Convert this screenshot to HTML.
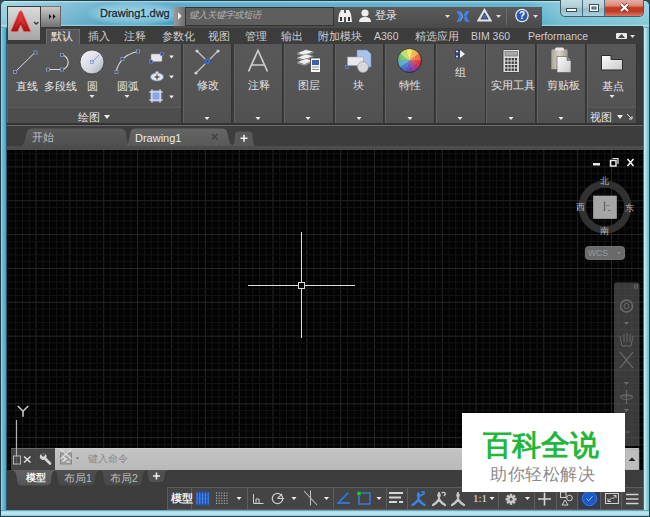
<!DOCTYPE html>
<html><head><meta charset="utf-8">
<style>
*{margin:0;padding:0;box-sizing:border-box}
html,body{width:650px;height:517px;overflow:hidden}
body{position:relative;background:#2c4c58;font-family:"Liberation Sans",sans-serif;color:#ddd}
.a{position:absolute}
.t{position:absolute;white-space:nowrap;line-height:1}
</style></head><body>
<!-- window frame -->
<div class="a" style="left:0;top:0;width:650px;height:517px;background:#6cc0dc;border:1px solid #23404c;border-radius:6px 6px 0 0"></div>
<div class="a" style="left:1px;top:28px;width:6px;height:488px;background:linear-gradient(90deg,#a4d6e4 0,#7cc0d8 20%,#5aaccc 60%,#4a9cc0 83%,#2a5a70 84%,#2a5a70 100%)"></div>
<div class="a" style="left:643px;top:28px;width:6px;height:488px;background:linear-gradient(90deg,#3c6e7e 0,#3c6e7e 16%,#c4eaf2 17%,#b4e2ec 45%,#86cadb 70%,#6cbcd2 100%)"></div>
<div class="a" style="left:1px;top:510px;width:648px;height:6px;background:linear-gradient(180deg,#4a8a9c 0,#a8dcea 25%,#c4eaf2 55%,#8ccfe2 100%)"></div>
<!-- title bar -->
<div class="a" style="left:1px;top:1px;width:648px;height:27px;border-radius:5px 5px 0 0;background:linear-gradient(90deg,#96cedd 0,#78bad2 60px,#56a8c8 110px,#4aa2c4 175px,#52aac8 520px,#78c2d6 560px,#8ccfde 100%)"></div>
<div class="a" style="left:1px;top:1px;width:648px;height:27px;border-radius:5px 5px 0 0;background:linear-gradient(180deg,rgba(255,255,255,0.6) 0,rgba(255,255,255,0.14) 2px,rgba(255,255,255,0.08) 40%,rgba(0,40,60,0.04) 86%,rgba(255,255,255,0.3) 91%,rgba(255,255,255,0.3) 93%,rgba(0,0,0,0.3) 100%)"></div>
<!-- ribbon tab bar -->
<div class="a" style="left:7px;top:26px;width:636px;height:18px;background:#3c3c3c;border-top:1px solid #2c3c44"></div>
<!-- ribbon panels bg -->
<div class="a" style="left:7px;top:44px;width:636px;height:81px;background:#3b3b3b"></div>
<!-- file tab bar -->
<div class="a" style="left:7px;top:125px;width:636px;height:24px;background:#3d3d3d"></div>
<!-- drawing area -->
<div class="a" style="left:7px;top:150px;width:636px;height:320px;background:#030303"></div>
<!-- grid -->
<svg class="a" style="left:0;top:0" width="650" height="517"><line x1="8.97" y1="150" x2="8.97" y2="469" stroke="#141414" stroke-width="1"/><line x1="15.74" y1="150" x2="15.74" y2="469" stroke="#141414" stroke-width="1"/><line x1="22.51" y1="150" x2="22.51" y2="469" stroke="#141414" stroke-width="1"/><line x1="29.28" y1="150" x2="29.28" y2="469" stroke="#141414" stroke-width="1"/><line x1="36.05" y1="150" x2="36.05" y2="469" stroke="#272727" stroke-width="1"/><line x1="42.82" y1="150" x2="42.82" y2="469" stroke="#141414" stroke-width="1"/><line x1="49.59" y1="150" x2="49.59" y2="469" stroke="#141414" stroke-width="1"/><line x1="56.36" y1="150" x2="56.36" y2="469" stroke="#141414" stroke-width="1"/><line x1="63.13" y1="150" x2="63.13" y2="469" stroke="#141414" stroke-width="1"/><line x1="69.90" y1="150" x2="69.90" y2="469" stroke="#272727" stroke-width="1"/><line x1="76.67" y1="150" x2="76.67" y2="469" stroke="#141414" stroke-width="1"/><line x1="83.44" y1="150" x2="83.44" y2="469" stroke="#141414" stroke-width="1"/><line x1="90.21" y1="150" x2="90.21" y2="469" stroke="#141414" stroke-width="1"/><line x1="96.98" y1="150" x2="96.98" y2="469" stroke="#141414" stroke-width="1"/><line x1="103.75" y1="150" x2="103.75" y2="469" stroke="#272727" stroke-width="1"/><line x1="110.52" y1="150" x2="110.52" y2="469" stroke="#141414" stroke-width="1"/><line x1="117.29" y1="150" x2="117.29" y2="469" stroke="#141414" stroke-width="1"/><line x1="124.06" y1="150" x2="124.06" y2="469" stroke="#141414" stroke-width="1"/><line x1="130.83" y1="150" x2="130.83" y2="469" stroke="#141414" stroke-width="1"/><line x1="137.60" y1="150" x2="137.60" y2="469" stroke="#272727" stroke-width="1"/><line x1="144.37" y1="150" x2="144.37" y2="469" stroke="#141414" stroke-width="1"/><line x1="151.14" y1="150" x2="151.14" y2="469" stroke="#141414" stroke-width="1"/><line x1="157.91" y1="150" x2="157.91" y2="469" stroke="#141414" stroke-width="1"/><line x1="164.68" y1="150" x2="164.68" y2="469" stroke="#141414" stroke-width="1"/><line x1="171.45" y1="150" x2="171.45" y2="469" stroke="#272727" stroke-width="1"/><line x1="178.22" y1="150" x2="178.22" y2="469" stroke="#141414" stroke-width="1"/><line x1="184.99" y1="150" x2="184.99" y2="469" stroke="#141414" stroke-width="1"/><line x1="191.76" y1="150" x2="191.76" y2="469" stroke="#141414" stroke-width="1"/><line x1="198.53" y1="150" x2="198.53" y2="469" stroke="#141414" stroke-width="1"/><line x1="205.30" y1="150" x2="205.30" y2="469" stroke="#272727" stroke-width="1"/><line x1="212.07" y1="150" x2="212.07" y2="469" stroke="#141414" stroke-width="1"/><line x1="218.84" y1="150" x2="218.84" y2="469" stroke="#141414" stroke-width="1"/><line x1="225.61" y1="150" x2="225.61" y2="469" stroke="#141414" stroke-width="1"/><line x1="232.38" y1="150" x2="232.38" y2="469" stroke="#141414" stroke-width="1"/><line x1="239.15" y1="150" x2="239.15" y2="469" stroke="#272727" stroke-width="1"/><line x1="245.92" y1="150" x2="245.92" y2="469" stroke="#141414" stroke-width="1"/><line x1="252.69" y1="150" x2="252.69" y2="469" stroke="#141414" stroke-width="1"/><line x1="259.46" y1="150" x2="259.46" y2="469" stroke="#141414" stroke-width="1"/><line x1="266.23" y1="150" x2="266.23" y2="469" stroke="#141414" stroke-width="1"/><line x1="273.00" y1="150" x2="273.00" y2="469" stroke="#272727" stroke-width="1"/><line x1="279.77" y1="150" x2="279.77" y2="469" stroke="#141414" stroke-width="1"/><line x1="286.54" y1="150" x2="286.54" y2="469" stroke="#141414" stroke-width="1"/><line x1="293.31" y1="150" x2="293.31" y2="469" stroke="#141414" stroke-width="1"/><line x1="300.08" y1="150" x2="300.08" y2="469" stroke="#141414" stroke-width="1"/><line x1="306.85" y1="150" x2="306.85" y2="469" stroke="#272727" stroke-width="1"/><line x1="313.62" y1="150" x2="313.62" y2="469" stroke="#141414" stroke-width="1"/><line x1="320.39" y1="150" x2="320.39" y2="469" stroke="#141414" stroke-width="1"/><line x1="327.16" y1="150" x2="327.16" y2="469" stroke="#141414" stroke-width="1"/><line x1="333.93" y1="150" x2="333.93" y2="469" stroke="#141414" stroke-width="1"/><line x1="340.70" y1="150" x2="340.70" y2="469" stroke="#272727" stroke-width="1"/><line x1="347.47" y1="150" x2="347.47" y2="469" stroke="#141414" stroke-width="1"/><line x1="354.24" y1="150" x2="354.24" y2="469" stroke="#141414" stroke-width="1"/><line x1="361.01" y1="150" x2="361.01" y2="469" stroke="#141414" stroke-width="1"/><line x1="367.78" y1="150" x2="367.78" y2="469" stroke="#141414" stroke-width="1"/><line x1="374.55" y1="150" x2="374.55" y2="469" stroke="#272727" stroke-width="1"/><line x1="381.32" y1="150" x2="381.32" y2="469" stroke="#141414" stroke-width="1"/><line x1="388.09" y1="150" x2="388.09" y2="469" stroke="#141414" stroke-width="1"/><line x1="394.86" y1="150" x2="394.86" y2="469" stroke="#141414" stroke-width="1"/><line x1="401.63" y1="150" x2="401.63" y2="469" stroke="#141414" stroke-width="1"/><line x1="408.40" y1="150" x2="408.40" y2="469" stroke="#272727" stroke-width="1"/><line x1="415.17" y1="150" x2="415.17" y2="469" stroke="#141414" stroke-width="1"/><line x1="421.94" y1="150" x2="421.94" y2="469" stroke="#141414" stroke-width="1"/><line x1="428.71" y1="150" x2="428.71" y2="469" stroke="#141414" stroke-width="1"/><line x1="435.48" y1="150" x2="435.48" y2="469" stroke="#141414" stroke-width="1"/><line x1="442.25" y1="150" x2="442.25" y2="469" stroke="#272727" stroke-width="1"/><line x1="449.02" y1="150" x2="449.02" y2="469" stroke="#141414" stroke-width="1"/><line x1="455.79" y1="150" x2="455.79" y2="469" stroke="#141414" stroke-width="1"/><line x1="462.56" y1="150" x2="462.56" y2="469" stroke="#141414" stroke-width="1"/><line x1="469.33" y1="150" x2="469.33" y2="469" stroke="#141414" stroke-width="1"/><line x1="476.10" y1="150" x2="476.10" y2="469" stroke="#272727" stroke-width="1"/><line x1="482.87" y1="150" x2="482.87" y2="469" stroke="#141414" stroke-width="1"/><line x1="489.64" y1="150" x2="489.64" y2="469" stroke="#141414" stroke-width="1"/><line x1="496.41" y1="150" x2="496.41" y2="469" stroke="#141414" stroke-width="1"/><line x1="503.18" y1="150" x2="503.18" y2="469" stroke="#141414" stroke-width="1"/><line x1="509.95" y1="150" x2="509.95" y2="469" stroke="#272727" stroke-width="1"/><line x1="516.72" y1="150" x2="516.72" y2="469" stroke="#141414" stroke-width="1"/><line x1="523.49" y1="150" x2="523.49" y2="469" stroke="#141414" stroke-width="1"/><line x1="530.26" y1="150" x2="530.26" y2="469" stroke="#141414" stroke-width="1"/><line x1="537.03" y1="150" x2="537.03" y2="469" stroke="#141414" stroke-width="1"/><line x1="543.80" y1="150" x2="543.80" y2="469" stroke="#272727" stroke-width="1"/><line x1="550.57" y1="150" x2="550.57" y2="469" stroke="#141414" stroke-width="1"/><line x1="557.34" y1="150" x2="557.34" y2="469" stroke="#141414" stroke-width="1"/><line x1="564.11" y1="150" x2="564.11" y2="469" stroke="#141414" stroke-width="1"/><line x1="570.88" y1="150" x2="570.88" y2="469" stroke="#141414" stroke-width="1"/><line x1="577.65" y1="150" x2="577.65" y2="469" stroke="#272727" stroke-width="1"/><line x1="584.42" y1="150" x2="584.42" y2="469" stroke="#141414" stroke-width="1"/><line x1="591.19" y1="150" x2="591.19" y2="469" stroke="#141414" stroke-width="1"/><line x1="597.96" y1="150" x2="597.96" y2="469" stroke="#141414" stroke-width="1"/><line x1="604.73" y1="150" x2="604.73" y2="469" stroke="#141414" stroke-width="1"/><line x1="611.50" y1="150" x2="611.50" y2="469" stroke="#272727" stroke-width="1"/><line x1="618.27" y1="150" x2="618.27" y2="469" stroke="#141414" stroke-width="1"/><line x1="625.04" y1="150" x2="625.04" y2="469" stroke="#141414" stroke-width="1"/><line x1="631.81" y1="150" x2="631.81" y2="469" stroke="#141414" stroke-width="1"/><line x1="638.58" y1="150" x2="638.58" y2="469" stroke="#141414" stroke-width="1"/><line x1="7" y1="153.36" x2="643" y2="153.36" stroke="#141414" stroke-width="1"/><line x1="7" y1="160.13" x2="643" y2="160.13" stroke="#141414" stroke-width="1"/><line x1="7" y1="166.90" x2="643" y2="166.90" stroke="#272727" stroke-width="1"/><line x1="7" y1="173.67" x2="643" y2="173.67" stroke="#141414" stroke-width="1"/><line x1="7" y1="180.44" x2="643" y2="180.44" stroke="#141414" stroke-width="1"/><line x1="7" y1="187.21" x2="643" y2="187.21" stroke="#141414" stroke-width="1"/><line x1="7" y1="193.98" x2="643" y2="193.98" stroke="#141414" stroke-width="1"/><line x1="7" y1="200.75" x2="643" y2="200.75" stroke="#272727" stroke-width="1"/><line x1="7" y1="207.52" x2="643" y2="207.52" stroke="#141414" stroke-width="1"/><line x1="7" y1="214.29" x2="643" y2="214.29" stroke="#141414" stroke-width="1"/><line x1="7" y1="221.06" x2="643" y2="221.06" stroke="#141414" stroke-width="1"/><line x1="7" y1="227.83" x2="643" y2="227.83" stroke="#141414" stroke-width="1"/><line x1="7" y1="234.60" x2="643" y2="234.60" stroke="#272727" stroke-width="1"/><line x1="7" y1="241.37" x2="643" y2="241.37" stroke="#141414" stroke-width="1"/><line x1="7" y1="248.14" x2="643" y2="248.14" stroke="#141414" stroke-width="1"/><line x1="7" y1="254.91" x2="643" y2="254.91" stroke="#141414" stroke-width="1"/><line x1="7" y1="261.68" x2="643" y2="261.68" stroke="#141414" stroke-width="1"/><line x1="7" y1="268.45" x2="643" y2="268.45" stroke="#272727" stroke-width="1"/><line x1="7" y1="275.22" x2="643" y2="275.22" stroke="#141414" stroke-width="1"/><line x1="7" y1="281.99" x2="643" y2="281.99" stroke="#141414" stroke-width="1"/><line x1="7" y1="288.76" x2="643" y2="288.76" stroke="#141414" stroke-width="1"/><line x1="7" y1="295.53" x2="643" y2="295.53" stroke="#141414" stroke-width="1"/><line x1="7" y1="302.30" x2="643" y2="302.30" stroke="#272727" stroke-width="1"/><line x1="7" y1="309.07" x2="643" y2="309.07" stroke="#141414" stroke-width="1"/><line x1="7" y1="315.84" x2="643" y2="315.84" stroke="#141414" stroke-width="1"/><line x1="7" y1="322.61" x2="643" y2="322.61" stroke="#141414" stroke-width="1"/><line x1="7" y1="329.38" x2="643" y2="329.38" stroke="#141414" stroke-width="1"/><line x1="7" y1="336.15" x2="643" y2="336.15" stroke="#272727" stroke-width="1"/><line x1="7" y1="342.92" x2="643" y2="342.92" stroke="#141414" stroke-width="1"/><line x1="7" y1="349.69" x2="643" y2="349.69" stroke="#141414" stroke-width="1"/><line x1="7" y1="356.46" x2="643" y2="356.46" stroke="#141414" stroke-width="1"/><line x1="7" y1="363.23" x2="643" y2="363.23" stroke="#141414" stroke-width="1"/><line x1="7" y1="370.00" x2="643" y2="370.00" stroke="#272727" stroke-width="1"/><line x1="7" y1="376.77" x2="643" y2="376.77" stroke="#141414" stroke-width="1"/><line x1="7" y1="383.54" x2="643" y2="383.54" stroke="#141414" stroke-width="1"/><line x1="7" y1="390.31" x2="643" y2="390.31" stroke="#141414" stroke-width="1"/><line x1="7" y1="397.08" x2="643" y2="397.08" stroke="#141414" stroke-width="1"/><line x1="7" y1="403.85" x2="643" y2="403.85" stroke="#272727" stroke-width="1"/><line x1="7" y1="410.62" x2="643" y2="410.62" stroke="#141414" stroke-width="1"/><line x1="7" y1="417.39" x2="643" y2="417.39" stroke="#141414" stroke-width="1"/><line x1="7" y1="424.16" x2="643" y2="424.16" stroke="#141414" stroke-width="1"/><line x1="7" y1="430.93" x2="643" y2="430.93" stroke="#141414" stroke-width="1"/><line x1="7" y1="437.70" x2="643" y2="437.70" stroke="#272727" stroke-width="1"/><line x1="7" y1="444.47" x2="643" y2="444.47" stroke="#141414" stroke-width="1"/><line x1="7" y1="451.24" x2="643" y2="451.24" stroke="#141414" stroke-width="1"/><line x1="7" y1="458.01" x2="643" y2="458.01" stroke="#141414" stroke-width="1"/><line x1="7" y1="464.78" x2="643" y2="464.78" stroke="#141414" stroke-width="1"/></svg>
<!-- drawing overlays -->
<svg class="a" style="left:0;top:0" width="650" height="517">
<!-- crosshair -->
<path d="M301.5 232 V282.5 M301.5 288.5 V338 M248 285.5 H298.5 M304.5 285.5 H355" stroke="#dcdcdc" stroke-width="1"/>
<rect x="298.5" y="282.5" width="6" height="6" fill="none" stroke="#d8d8d8" stroke-width="1"/>
<!-- UCS -->
<path d="M17.8 406 L23 411.3 L28.2 406 M23 411.3 V416.8" fill="none" stroke="#d0d0d0" stroke-width="1.5"/>
<path d="M16.5 420 V465" stroke="#b0b0b0" stroke-width="1.2"/>
<!-- viewport controls -->
<rect x="593" y="163" width="7" height="2.5" fill="#e8e8e8"/>
<rect x="610.5" y="160.5" width="5.5" height="5.5" fill="none" stroke="#e8e8e8" stroke-width="1.5"/>
<path d="M612.5 158.5 H618 V164" fill="none" stroke="#e8e8e8" stroke-width="1.2"/>
<path d="M627.5 159 L633.5 166 M633.5 159 L627.5 166" stroke="#f0f0f0" stroke-width="1.6"/>
<!-- viewcube -->
<circle cx="605" cy="207" r="22.8" fill="none" stroke="#313131" stroke-width="7.2"/>
<rect x="593.5" y="196" width="23" height="22.5" fill="#a6a6a6" stroke="#b4b4b4" stroke-width="0.6"/>
<!-- WCS -->
<rect x="585.5" y="246.5" width="39" height="13" rx="3" fill="#6a6a6a" stroke="#808080" stroke-width="0.8"/>
<path d="M617 252 L621 252 L619 254.5Z" fill="#8a8a8a"/>
<!-- navbar -->
<path d="M614 446 V285 Q614 282.5 616.5 282.5 L637 282.5 Q639.5 282.5 639.5 285 V446Z" fill="#5c5c5c" fill-opacity="0.62"/>
<rect x="634.5" y="285" width="3" height="3" fill="none" stroke="#7a7a7a" stroke-width="0.7"/>
<circle cx="626.5" cy="306" r="6" fill="none" stroke="#6a6a6a" stroke-width="1.5"/>
<circle cx="626.5" cy="306" r="2.5" fill="none" stroke="#6a6a6a" stroke-width="1"/>
<path d="M624 322 L629 322 L626.5 325Z" fill="#6a6a6a"/>
<path d="M620 336 L622 346 L631 346 L633 336 M624 334 V342 M627 333 V342 M630 334 V342" fill="none" stroke="#666666" stroke-width="1"/>
<path d="M620 352 L633 368 M633 352 L620 368" stroke="#666666" stroke-width="1.2"/>
<path d="M624 382 L629 382 L626.5 385Z" fill="#6a6a6a"/>
<path d="M620 396 H633 M626.5 390 V404" stroke="#666666" stroke-width="1.2"/>
<ellipse cx="626.5" cy="397" rx="6" ry="2.5" fill="none" stroke="#666666" stroke-width="1"/>
<path d="M624 409 L629 409 L626.5 412Z" fill="#6a6a6a"/>
<path d="M622 418 V432 H630" fill="none" stroke="#666666" stroke-width="1"/>
</svg>
<div class="t" style="left:599.5px;top:177px;font-size:9px;color:#b4b4b4">北</div>
<div class="t" style="left:599.5px;top:227px;font-size:9px;color:#b4b4b4">南</div>
<div class="t" style="left:575.5px;top:202.5px;font-size:9px;color:#b4b4b4">西</div>
<div class="t" style="left:624.5px;top:203.5px;font-size:9px;color:#b4b4b4">东</div>
<svg class="a" style="left:590px;top:190px" width="30" height="30"><path d="M14.5 11.5 V21" stroke="#606060" stroke-width="1.3"/><path d="M16 15.5 H19.5 M18 20.5 H21" stroke="#7a7a7a" stroke-width="1"/></svg>
<div class="t" style="left:588px;top:249px;font-size:8.5px;color:#9a9a9a">WCS</div>
<!-- command line -->
<div class="a" style="left:11px;top:448px;width:44px;height:22px;background:rgba(80,80,80,0.85);border-top:1px solid #6a6a6a"></div>
<div class="a" style="left:55px;top:448px;width:584px;height:22px;background:linear-gradient(180deg,#c4c4c4 0,#b9b9b9 100%);border-top:1px solid #d0d0d0"></div>
<svg class="a" style="left:0;top:440px" width="650" height="35">
<path d="M16.5 8 V16" stroke="#b0b0b0" stroke-width="1.2"/><rect x="13.5" y="16" width="7" height="8" fill="none" stroke="#b8b8b8" stroke-width="1"/>
<path d="M24 16.5 L30.5 22.5 M30.5 16.5 L24 22.5" stroke="#dedede" stroke-width="1.6"/>
<path d="M44 17.5 L50 23.5" stroke="#d8d8d8" stroke-width="2.6" stroke-linecap="round"/><circle cx="43.2" cy="16.6" r="3.3" fill="#d8d8d8"/><path d="M40.5 13.2 L43.2 16.2 L45.5 13.6" fill="#4c4c4c" stroke="#4c4c4c" stroke-width="1.2"/>
<rect x="60.5" y="13" width="11" height="11" fill="#a4a4a4" stroke="#7a7a7a" stroke-width="0.8"/>
<path d="M62.5 16.5 L66 19 L62.5 21.5 M66.5 22 H70" fill="none" stroke="#e8e8e8" stroke-width="1.2"/>
<path d="M60.5 9 L71.5 19 M71.5 9 L60.5 19" stroke="#dcdcdc" stroke-width="1.2"/>
<path d="M76 17.5 L79 17.5 L77.5 19.5Z" fill="#666"/>
<rect x="625" y="9" width="14" height="21" fill="#bdbdbd" stroke="#999" stroke-width="0.6"/>
<path d="M628.5 21 L635.5 21 L632 17.5Z" fill="#222"/>
</svg>
<div class="t" style="left:88px;top:454px;font-size:10px;color:#8a8a8a">键入命令</div>
<!-- layout tab bar -->
<div class="a" style="left:7px;top:470px;width:636px;height:15px;background:#3c3c3c"></div>
<!-- status bar -->
<div class="a" style="left:7px;top:485px;width:636px;height:25px;background:#3c3c3c"></div>
<svg class="a" style="left:0;top:465px" width="650" height="50">
<defs><linearGradient id="lt" x1="0" y1="0" x2="0" y2="1"><stop offset="0" stop-color="#4e4e4e"/><stop offset="1" stop-color="#474747"/></linearGradient>
<linearGradient id="lta" x1="0" y1="0" x2="0" y2="1"><stop offset="0" stop-color="#636363"/><stop offset="1" stop-color="#555"/></linearGradient></defs>
<path d="M54 5 L100 5 Q96 6 95.5 11 L95 16 Q94.5 20.5 90 20.5 L63 20.5 Q58.5 20.5 58 16 L57.5 11 Q57 6 54 5Z" fill="url(#lt)"/>
<path d="M100 5 L147 5 Q143 6 142.5 11 L142 16 Q141.5 20.5 137 20.5 L109 20.5 Q104.5 20.5 104 16 L103.5 11 Q103 6 100 5Z" fill="url(#lt)"/>
<path d="M12 5 L56 5 Q52 6 51.5 11 L51 16 Q50.5 20.5 46 20.5 L22 20.5 Q17.5 20.5 17 16 L16.5 11 Q16 6 12 5Z" fill="url(#lta)"/>
<path d="M147 5 L168 5 Q165 6 164.5 10 L164 14 Q163.5 17 160 17 L152 17 Q149 17 148.5 13 Z" fill="#505050"/>
<path d="M156.5 7.5 V14.5 M153 11 H160" stroke="#eee" stroke-width="1.5"/>
</svg>
<div class="t" style="left:26px;top:473px;font-size:10px;color:#f4f4f4;font-weight:bold">模型</div>
<div class="t" style="left:64px;top:473px;font-size:10.5px;color:#bcbcbc">布局1</div>
<div class="t" style="left:110px;top:473px;font-size:10.5px;color:#bcbcbc">布局2</div>
<!-- status items -->
<div class="a" style="left:167px;top:487px;width:476px;height:23px;background:#444;border:1px solid #5c5c5c;border-right:none"></div>
<svg class="a" style="left:0;top:480px" width="650" height="37">
<g stroke="#5e5e5e" stroke-width="1"><path d="M191.5 8 V29 M247.5 8 V29 M333.5 8 V29 M386.5 8 V29 M407.5 8 V29 M498.5 8 V29 M534.5 8 V29 M556.5 8 V29 M577.5 8 V29 M600.5 8 V29 M621.5 8 V29"/></g>
<defs><radialGradient id="bg1" cx="0.5" cy="0.5" r="0.6"><stop offset="0" stop-color="#2456c0"/><stop offset="0.7" stop-color="#1f48a0"/><stop offset="1" stop-color="#2a4a90" stop-opacity="0.3"/></radialGradient></defs>
<rect x="195" y="11" width="15" height="15" rx="3" fill="url(#bg1)"/>
<path d="M197 12.5 V24.5 M199.8 12.5 V24.5 M202.6 12.5 V24.5 M205.4 12.5 V24.5 M208.2 12.5 V24.5" stroke="#4f8ef8" stroke-width="1"/><path d="M196 15 H209 M196 18.5 H209 M196 22 H209" stroke="#3f78e0" stroke-width="0.8" opacity="0.7"/>
<g fill="#b8b8b8"><rect x="216.0" y="12.5" width="1.1" height="1.1"/><rect x="218.6" y="12.5" width="1.1" height="1.1"/><rect x="221.2" y="12.5" width="1.1" height="1.1"/><rect x="223.8" y="12.5" width="1.1" height="1.1"/><rect x="226.4" y="12.5" width="1.1" height="1.1"/><rect x="216.0" y="15.1" width="1.1" height="1.1"/><rect x="218.6" y="15.1" width="1.1" height="1.1"/><rect x="221.2" y="15.1" width="1.1" height="1.1"/><rect x="223.8" y="15.1" width="1.1" height="1.1"/><rect x="226.4" y="15.1" width="1.1" height="1.1"/><rect x="216.0" y="17.7" width="1.1" height="1.1"/><rect x="218.6" y="17.7" width="1.1" height="1.1"/><rect x="221.2" y="17.7" width="1.1" height="1.1"/><rect x="223.8" y="17.7" width="1.1" height="1.1"/><rect x="226.4" y="17.7" width="1.1" height="1.1"/><rect x="216.0" y="20.3" width="1.1" height="1.1"/><rect x="218.6" y="20.3" width="1.1" height="1.1"/><rect x="221.2" y="20.3" width="1.1" height="1.1"/><rect x="223.8" y="20.3" width="1.1" height="1.1"/><rect x="226.4" y="20.3" width="1.1" height="1.1"/><rect x="216.0" y="22.9" width="1.1" height="1.1"/><rect x="218.6" y="22.9" width="1.1" height="1.1"/><rect x="221.2" y="22.9" width="1.1" height="1.1"/><rect x="223.8" y="22.9" width="1.1" height="1.1"/><rect x="226.4" y="22.9" width="1.1" height="1.1"/></g>
<path d="M236.5 17 L241.5 17 L239 20Z" fill="#eee"/>
<path d="M253.5 14 V23.5 H263.5 M256 19 V23 M256 19 H259 V23" fill="none" stroke="#cfcfcf" stroke-width="1"/>
<circle cx="277.5" cy="18.5" r="5.2" fill="none" stroke="#cfcfcf" stroke-width="1.2"/><path d="M277.5 18.5 H284 M277.5 18.5 L282 14" stroke="#cfcfcf" stroke-width="1.1"/>
<path d="M291.5 17 L296.5 17 L294 20Z" fill="#eee"/>
<path d="M304 11 L317 25 M310.5 10.5 V25.5" stroke="#bdbdbd" stroke-width="1.1"/>
<path d="M324 17 L329 17 L326.5 20Z" fill="#eee"/>
<path d="M337 24 L350 24 L350 22 L340.5 22 L349 13 L347.5 12 L337 23Z" fill="#2e74dc"/>
<rect x="359" y="13" width="11" height="11" fill="none" stroke="#3a82e8" stroke-width="1.3"/>
<rect x="357" y="11.5" width="4" height="4" fill="#28c040" stroke="#106020" stroke-width="0.5"/>
<path d="M376.5 17 L381.5 17 L379 20Z" fill="#eee"/>
<path d="M389 13 H403 M389 17.5 H401 M389 22 H397 M399 22 H403" stroke="#d6d6d6" stroke-width="2"/>
<path d="M412.5 25 Q415.5 23.5 418.5 19.5 Q421.5 23.5 424.5 25" fill="none" stroke="#3a86ec" stroke-width="2.4" stroke-linecap="round"/><path d="M418.5 20 L417.2 15 L418.5 12 L419.8 15Z" fill="#3a86ec" stroke="#3a86ec" stroke-width="1"/><path d="M420 16 L424.5 13.5 M421 12 L425 12" stroke="#3a86ec" stroke-width="1.6"/>
<path d="M433 25 Q436 23.5 439 19.5 Q442 23.5 445 25" fill="none" stroke="#c8c8c8" stroke-width="2.4" stroke-linecap="round"/><path d="M439 20 L437.7 15 L439 12 L440.3 15Z" fill="#c8c8c8" stroke="#c8c8c8" stroke-width="1"/><path d="M441.5 13 Q444 11.5 445.5 14 L444 16" fill="none" stroke="#c8c8c8" stroke-width="1.3"/>
<path d="M452 25 Q455 23.5 458 19.5 Q461 23.5 464 25" fill="none" stroke="#c8c8c8" stroke-width="2.4" stroke-linecap="round"/><path d="M458 20 L456.7 15 L458 12 L459.3 15Z" fill="#c8c8c8" stroke="#c8c8c8" stroke-width="1"/>
<path d="M489.5 17 L494.5 17 L492 20Z" fill="#eee"/>
<rect x="509.8" y="13.8" width="2.4" height="3" fill="#c8c8c8" transform="rotate(0 511 19.3)"/><rect x="509.8" y="13.8" width="2.4" height="3" fill="#c8c8c8" transform="rotate(45 511 19.3)"/><rect x="509.8" y="13.8" width="2.4" height="3" fill="#c8c8c8" transform="rotate(90 511 19.3)"/><rect x="509.8" y="13.8" width="2.4" height="3" fill="#c8c8c8" transform="rotate(135 511 19.3)"/><rect x="509.8" y="13.8" width="2.4" height="3" fill="#c8c8c8" transform="rotate(180 511 19.3)"/><rect x="509.8" y="13.8" width="2.4" height="3" fill="#c8c8c8" transform="rotate(225 511 19.3)"/><rect x="509.8" y="13.8" width="2.4" height="3" fill="#c8c8c8" transform="rotate(270 511 19.3)"/><rect x="509.8" y="13.8" width="2.4" height="3" fill="#c8c8c8" transform="rotate(315 511 19.3)"/><circle cx="511" cy="19.3" r="3.9" fill="#c8c8c8"/><circle cx="511" cy="19.3" r="1.5" fill="#555"/>
<path d="M525 17 L530 17 L527.5 20Z" fill="#eee"/>
<path d="M544.5 12.5 V25.5 M538 19 H551" stroke="#d8d8d8" stroke-width="1.6"/>
<rect x="560.5" y="12" width="5.5" height="5.5" fill="none" stroke="#cfcfcf" stroke-width="1"/>
<circle cx="569.5" cy="18" r="2.8" fill="none" stroke="#cfcfcf" stroke-width="1"/>
<path d="M562 25 L565 20 L568 25Z" fill="none" stroke="#cfcfcf" stroke-width="1"/>
<rect x="579" y="9" width="21" height="20" fill="#2f3c55"/>
<circle cx="589.5" cy="18.5" r="7.2" fill="#1b58c8" stroke="#4a86e8" stroke-width="0.8"/>
<path d="M586.5 18.5 L588.7 20.7 L592.5 16.3" fill="none" stroke="#9cc0f4" stroke-width="1"/>
<rect x="605.5" y="13.5" width="13" height="10" fill="none" stroke="#d0d0d0" stroke-width="1"/>
<path d="M608 21.5 L612 17.5 M608 18.5 V21.5 H611 M616 15.5 L612.5 19 M613.5 15.5 H616 V18" fill="none" stroke="#d0d0d0" stroke-width="1"/>
<path d="M626 14.5 H638.5 M626 19 H638.5 M626 23.5 H638.5" stroke="#d0d0d0" stroke-width="1.5"/>
</svg>
<div class="t" style="left:171px;top:493px;font-size:10.5px;color:#f0f0f0;font-weight:bold">模型</div>
<div class="t" style="left:473px;top:493px;font-size:11px;color:#e4e4e4;font-family:'Liberation Serif',serif">1:1</div>
<!-- ribbon tabs -->
<div class="a" style="left:46px;top:29px;width:34px;height:16px;background:#575757;border:1px solid #6a6a6a;border-bottom:none"></div>
<div class="t" style="left:51px;top:31px;font-size:10.5px;color:#eeeeee">默认</div>
<div class="t" style="left:88px;top:31px;font-size:10.5px;color:#cdcdcd">插入</div>
<div class="t" style="left:124px;top:31px;font-size:10.5px;color:#cdcdcd">注释</div>
<div class="t" style="left:162px;top:31px;font-size:10.5px;color:#cdcdcd">参数化</div>
<div class="t" style="left:208px;top:31px;font-size:10.5px;color:#cdcdcd">视图</div>
<div class="t" style="left:245px;top:31px;font-size:10.5px;color:#cdcdcd">管理</div>
<div class="t" style="left:281px;top:31px;font-size:10.5px;color:#cdcdcd">输出</div>
<div class="t" style="left:318px;top:31px;font-size:10.5px;color:#cdcdcd">附加模块</div>
<div class="t" style="left:374px;top:31px;font-size:10.5px;color:#cdcdcd">A360</div>
<div class="t" style="left:415px;top:31px;font-size:10.5px;color:#cdcdcd">精选应用</div>
<div class="t" style="left:471px;top:31px;font-size:10.5px;color:#cdcdcd">BIM 360</div>
<div class="t" style="left:528px;top:31px;font-size:10.5px;color:#cdcdcd">Performance</div>
<div class="a" style="left:616px;top:33px;width:11px;height:6px;background:#e8e8e8;border-radius:1px"></div>
<svg class="a" style="left:618px;top:34px" width="7" height="4"><path d="M0 4 L3.5 0 L7 4Z" fill="#444"/></svg>
<svg class="a" style="left:630px;top:35px" width="5" height="3"><path d="M0 0 L5 0 L2.5 3Z" fill="#ddd"/></svg>
<!-- panels -->
<div class="a" style="left:7px;top:44px;width:175px;height:79px;background:linear-gradient(180deg,#585858 0,#545454 70%,#505050 100%);border-left:1px solid #626262;border-right:1px solid #343434"></div>
<div class="a" style="left:183px;top:44px;width:49px;height:79px;background:linear-gradient(180deg,#585858 0,#545454 70%,#505050 100%);border-left:1px solid #626262;border-right:1px solid #343434"></div>
<div class="a" style="left:234px;top:44px;width:49px;height:79px;background:linear-gradient(180deg,#585858 0,#545454 70%,#505050 100%);border-left:1px solid #626262;border-right:1px solid #343434"></div>
<div class="a" style="left:284px;top:44px;width:50px;height:79px;background:linear-gradient(180deg,#585858 0,#545454 70%,#505050 100%);border-left:1px solid #626262;border-right:1px solid #343434"></div>
<div class="a" style="left:335px;top:44px;width:49px;height:79px;background:linear-gradient(180deg,#585858 0,#545454 70%,#505050 100%);border-left:1px solid #626262;border-right:1px solid #343434"></div>
<div class="a" style="left:385px;top:44px;width:50px;height:79px;background:linear-gradient(180deg,#585858 0,#545454 70%,#505050 100%);border-left:1px solid #626262;border-right:1px solid #343434"></div>
<div class="a" style="left:436px;top:44px;width:50px;height:79px;background:linear-gradient(180deg,#585858 0,#545454 70%,#505050 100%);border-left:1px solid #626262;border-right:1px solid #343434"></div>
<div class="a" style="left:486px;top:44px;width:50px;height:79px;background:linear-gradient(180deg,#585858 0,#545454 70%,#505050 100%);border-left:1px solid #626262;border-right:1px solid #343434"></div>
<div class="a" style="left:537px;top:44px;width:49px;height:79px;background:linear-gradient(180deg,#585858 0,#545454 70%,#505050 100%);border-left:1px solid #626262;border-right:1px solid #343434"></div>
<div class="a" style="left:587px;top:44px;width:50px;height:79px;background:linear-gradient(180deg,#585858 0,#545454 70%,#505050 100%);border-left:1px solid #626262;border-right:1px solid #343434"></div>
<div class="a" style="left:8px;top:107px;width:173px;height:16px;background:#4d4d4d;border-top:1px solid #5a5a5a"></div>
<div class="a" style="left:588px;top:107px;width:48px;height:16px;background:#4d4d4d;border-top:1px solid #5a5a5a"></div>
<div class="a" style="left:7px;top:123px;width:636px;height:2px;background:#333"></div>
<div class="a" style="left:7px;top:125px;width:636px;height:1px;background:#6a6a6a"></div>
<!-- draw panel -->
<svg class="a" style="left:0;top:0" width="650" height="130"><line x1="15" y1="72" x2="35.5" y2="52" stroke="#d8d8d8" stroke-width="1"/><rect x="13.5" y="70.5" width="3" height="3" fill="#3e4a66" stroke="#8c9cc8" stroke-width="0.8"/><rect x="34.0" y="51.0" width="3" height="3" fill="#3e4a66" stroke="#8c9cc8" stroke-width="0.8"/><path d="M46 69.5 L62 69.5 A7 7.3 0 0 0 62 55" fill="none" stroke="#d8d8d8" stroke-width="1.2"/><rect x="46.5" y="68.0" width="3" height="3" fill="#3e4a66" stroke="#8c9cc8" stroke-width="0.8"/><rect x="60.5" y="68.0" width="3" height="3" fill="#3e4a66" stroke="#8c9cc8" stroke-width="0.8"/><rect x="60.5" y="53.5" width="3" height="3" fill="#3e4a66" stroke="#8c9cc8" stroke-width="0.8"/><defs><linearGradient id="cg" x1="0" y1="0" x2="1" y2="1"><stop offset="0" stop-color="#f4f4f8"/><stop offset="0.6" stop-color="#d6d8e2"/><stop offset="1" stop-color="#a8aab8"/></linearGradient></defs><circle cx="92" cy="62" r="12" fill="url(#cg)" stroke="#3a3a3a" stroke-width="0.8"/><line x1="92" y1="62" x2="99" y2="55" stroke="#7d9ad8" stroke-width="1"/><rect x="90.5" y="60.5" width="3" height="3" fill="none" stroke="#7d9ad8" stroke-width="0.8"/><path d="M116 72 Q120 55 138 51.5" fill="none" stroke="#d8d8d8" stroke-width="1.1"/><rect x="115.0" y="70.5" width="3" height="3" fill="#3e4a66" stroke="#8c9cc8" stroke-width="0.8"/><rect x="121.0" y="57.5" width="3" height="3" fill="#3e4a66" stroke="#8c9cc8" stroke-width="0.8"/><rect x="136.5" y="50.0" width="3" height="3" fill="#3e4a66" stroke="#8c9cc8" stroke-width="0.8"/><rect x="151" y="54" width="11" height="7.5" rx="1" fill="#e6e6ea" stroke="#9a9aa6" stroke-width="0.6"/><rect x="149.5" y="60" width="3" height="3" fill="#3a4a78" stroke="#6f8ad0" stroke-width="0.7"/><rect x="160.5" y="52.5" width="3" height="3" fill="#3a4a78" stroke="#6f8ad0" stroke-width="0.7"/><ellipse cx="157" cy="77" rx="6.5" ry="4" fill="#e6e6ea" stroke="#6f8ad0" stroke-width="0.7"/><path d="M157 74.5 V79.5 M154.5 77 H159.5" stroke="#333" stroke-width="1"/><rect x="155.5" y="71.5" width="3" height="2" fill="#ddd"/><rect x="151" y="91" width="10" height="10" fill="#8aa4e8" stroke="#c8d4f4" stroke-width="0.8"/><path d="M149 92 H163 M149 100 H163 M152 89 V103 M160 89 V103" stroke="#f0f0f0" stroke-width="0.8"/><path d="M169 55.5 L174 55.5 L171.5 58.5Z" fill="#e8e8e8"/><path d="M169 75.5 L174 75.5 L171.5 78.5Z" fill="#e8e8e8"/><path d="M169 95.5 L174 95.5 L171.5 98.5Z" fill="#e8e8e8"/><path d="M89.5 95 L94.5 95 L92 98Z" fill="#e8e8e8"/><path d="M124.5 95 L129.5 95 L127 98Z" fill="#e8e8e8"/><path d="M104 115 L110 115 L107 119Z" fill="#eee"/></svg>
<div class="t" style="left:16px;top:81px;font-size:10.5px;color:#e6e6e6">直线</div>
<div class="t" style="left:44px;top:81px;font-size:10.5px;color:#e6e6e6">多段线</div>
<div class="t" style="left:87px;top:81px;font-size:10.5px;color:#e6e6e6">圆</div>
<div class="t" style="left:117px;top:81px;font-size:10.5px;color:#e6e6e6">圆弧</div>
<div class="t" style="left:78px;top:112px;font-size:10.5px;color:#e6e6e6">绘图</div>
<!-- other panels -->
<svg class="a" style="left:0;top:0" width="650" height="130"><path d="M197 51 L207.5 61.5 M218 51 L196 73" stroke="#c4c4c4" stroke-width="1.2"/><circle cx="197" cy="51" r="1.6" fill="#d0d0d0"/><circle cx="218" cy="51" r="1.6" fill="#d0d0d0"/><circle cx="196" cy="73" r="1.6" fill="#d0d0d0"/><circle cx="207.5" cy="61.5" r="2.9" fill="#4a72d0" stroke="#3a4a80" stroke-width="0.8"/><circle cx="207.5" cy="61.5" r="1" fill="#2a3f80"/><path d="M248.5 71.5 L258 50.5 L267.5 71.5 M251.5 65 L264.5 65" fill="none" stroke="#cdcdcd" stroke-width="1.7"/><path d="M297 53 L306 49.5 L313.5 51.5 L304.5 55.5Z" fill="#f0f0f0" stroke="#555" stroke-width="0.5"/><path d="M297 53 L304.5 55.5 L313.5 51.5 L313.5 52.7 L304.5 56.7 L297 54.2Z" fill="#9a9a9a"/><path d="M297 57.5 L306 54.0 L313.5 56.0 L304.5 60.0Z" fill="#f0f0f0" stroke="#555" stroke-width="0.5"/><path d="M297 57.5 L304.5 60.0 L313.5 56.0 L313.5 57.2 L304.5 61.2 L297 58.7Z" fill="#9a9a9a"/><path d="M297 62 L306 58.5 L313.5 60.5 L304.5 64.5Z" fill="#f0f0f0" stroke="#555" stroke-width="0.5"/><path d="M297 62 L304.5 64.5 L313.5 60.5 L313.5 61.7 L304.5 65.7 L297 63.2Z" fill="#9a9a9a"/><rect x="310.5" y="58" width="10" height="14.5" fill="#f6f6f6" stroke="#444" stroke-width="0.8"/><rect x="312" y="60" width="7" height="5" fill="#3a5fb0"/><path d="M312 67 H319 M312 69.5 H319" stroke="#777" stroke-width="0.8"/><path d="M357 50 L367 50 L371 54 L371 67 L357 67Z" fill="#a9c4e8" stroke="#6e8fc0" stroke-width="0.6"/><rect x="347.5" y="57" width="16" height="8.5" fill="#e8e8ec" stroke="#9aa0b0" stroke-width="0.6"/><circle cx="363" cy="67" r="5.5" fill="#d8d8dc" stroke="#8a8a96" stroke-width="0.6"/><rect x="345.5" y="65.5" width="3" height="3" fill="#4a5a90" stroke="#7a90d0" stroke-width="0.6"/><path d="M409.5 60.5 L405.79 49.09 A12 12 0 0 1 413.21 49.09Z" fill="#f2e23a"/><path d="M409.5 60.5 L413.21 49.09 A12 12 0 0 1 419.21 53.45Z" fill="#f5a623"/><path d="M409.5 60.5 L419.21 53.45 A12 12 0 0 1 421.50 60.50Z" fill="#ec5a2a"/><path d="M409.5 60.5 L421.50 60.50 A12 12 0 0 1 419.21 67.55Z" fill="#d8233a"/><path d="M409.5 60.5 L419.21 67.55 A12 12 0 0 1 413.21 71.91Z" fill="#a02a8a"/><path d="M409.5 60.5 L413.21 71.91 A12 12 0 0 1 405.79 71.91Z" fill="#5a3aa8"/><path d="M409.5 60.5 L405.79 71.91 A12 12 0 0 1 399.79 67.55Z" fill="#2f5fc8"/><path d="M409.5 60.5 L399.79 67.55 A12 12 0 0 1 397.50 60.50Z" fill="#3a9ad0"/><path d="M409.5 60.5 L397.50 60.50 A12 12 0 0 1 399.79 53.45Z" fill="#4ab848"/><path d="M409.5 60.5 L399.79 53.45 A12 12 0 0 1 405.79 49.09Z" fill="#a8d838"/><circle cx="409.5" cy="60.5" r="12" fill="none" stroke="#2a2a2a" stroke-width="1"/><circle cx="409.5" cy="60.5" r="12" fill="url(#wg)" /><defs><radialGradient id="wg" cx="0.4" cy="0.35" r="0.7"><stop offset="0" stop-color="#fff" stop-opacity="0.35"/><stop offset="1" stop-color="#fff" stop-opacity="0"/></radialGradient></defs><rect x="455" y="49.5" width="6" height="9" fill="#34406a"/><circle cx="457" cy="51.5" r="1" fill="#eee"/><circle cx="457" cy="56.5" r="1" fill="#eee"/><path d="M460 50 L465 54 L460 58Z" fill="#f0f0f0"/><rect x="503" y="49.5" width="16.5" height="23" rx="1" fill="#dcdcdc" stroke="#333" stroke-width="0.8"/><rect x="505" y="51.5" width="12.5" height="4.5" fill="#a8a8a8" stroke="#555" stroke-width="0.5"/><rect x="505.2" y="58.0" width="2.3" height="2.4" fill="#3a3a3a"/><rect x="508.4" y="58.0" width="2.3" height="2.4" fill="#3a3a3a"/><rect x="511.6" y="58.0" width="2.3" height="2.4" fill="#3a3a3a"/><rect x="514.8" y="58.0" width="2.3" height="2.4" fill="#3a3a3a"/><rect x="505.2" y="61.5" width="2.3" height="2.4" fill="#3a3a3a"/><rect x="508.4" y="61.5" width="2.3" height="2.4" fill="#3a3a3a"/><rect x="511.6" y="61.5" width="2.3" height="2.4" fill="#3a3a3a"/><rect x="514.8" y="61.5" width="2.3" height="2.4" fill="#3a3a3a"/><rect x="505.2" y="65.0" width="2.3" height="2.4" fill="#3a3a3a"/><rect x="508.4" y="65.0" width="2.3" height="2.4" fill="#3a3a3a"/><rect x="511.6" y="65.0" width="2.3" height="2.4" fill="#3a3a3a"/><rect x="514.8" y="65.0" width="2.3" height="2.4" fill="#3a3a3a"/><rect x="505.2" y="68.5" width="2.3" height="2.4" fill="#3a3a3a"/><rect x="508.4" y="68.5" width="2.3" height="2.4" fill="#3a3a3a"/><rect x="511.6" y="68.5" width="2.3" height="2.4" fill="#3a3a3a"/><rect x="514.8" y="68.5" width="2.3" height="2.4" fill="#3a3a3a"/><defs><linearGradient id="clg" x1="0" y1="0" x2="1" y2="0"><stop offset="0" stop-color="#a8a496"/><stop offset="0.5" stop-color="#d8d4c6"/><stop offset="1" stop-color="#9a968a"/></linearGradient><linearGradient id="pg" x1="0" y1="0" x2="1" y2="1"><stop offset="0" stop-color="#ffffff"/><stop offset="1" stop-color="#c8c8c8"/></linearGradient></defs><path d="M551 51 Q551 49 553 49 L566 49 Q568 49 568 51 L568 69.5 L551 69.5Z" fill="url(#clg)" stroke="#555" stroke-width="0.6"/><rect x="555" y="47.5" width="9" height="3" rx="1.5" fill="#e8e8e8"/><path d="M557 56.5 L567 56.5 L571 60.5 L571 72.5 L557 72.5Z" fill="url(#pg)" stroke="#555" stroke-width="0.6"/><path d="M567 56.5 L567 60.5 L571 60.5" fill="#888" stroke="#555" stroke-width="0.5"/><path d="M601.5 55.5 L611 55.5 L611 59.5 L622.5 59.5 L622.5 70 L601.5 70Z" fill="url(#pg)" stroke="#2e2e2e" stroke-width="1"/><path d="M204.5 117 L209.5 117 L207 120Z" fill="#eeeeee"/><path d="M255.5 117 L260.5 117 L258 120Z" fill="#eeeeee"/><path d="M305.5 117 L310.5 117 L308 120Z" fill="#eeeeee"/><path d="M356.5 117 L361.5 117 L359 120Z" fill="#eeeeee"/><path d="M407.5 117 L412.5 117 L410 120Z" fill="#eeeeee"/><path d="M457.5 117 L462.5 117 L460 120Z" fill="#eeeeee"/><path d="M508.5 117 L513.5 117 L511 120Z" fill="#eeeeee"/><path d="M558.5 117 L563.5 117 L561 120Z" fill="#eeeeee"/><path d="M609.5 95 L614.5 95 L612 98Z" fill="#e8e8e8"/><path d="M617 115 L623 115 L620 119Z" fill="#eee"/><path d="M627 114 L632 119 M632 116 V119 H629" stroke="#ddd" stroke-width="1" fill="none"/></svg>
<div class="t" style="left:197px;top:80px;font-size:10.5px;color:#e2e2e2">修改</div>
<div class="t" style="left:248px;top:80px;font-size:10.5px;color:#e2e2e2">注释</div>
<div class="t" style="left:298px;top:80px;font-size:10.5px;color:#e2e2e2">图层</div>
<div class="t" style="left:353px;top:80px;font-size:10.5px;color:#e2e2e2">块</div>
<div class="t" style="left:399px;top:80px;font-size:10.5px;color:#e2e2e2">特性</div>
<div class="t" style="left:455px;top:67px;font-size:10.5px;color:#e2e2e2">组</div>
<div class="t" style="left:491px;top:80px;font-size:10.5px;color:#e2e2e2">实用工具</div>
<div class="t" style="left:547px;top:80px;font-size:10.5px;color:#e2e2e2">剪贴板</div>
<div class="t" style="left:602px;top:81px;font-size:10.5px;color:#e2e2e2">基点</div>
<div class="t" style="left:590px;top:112px;font-size:10.5px;color:#e2e2e2">视图</div>
<!-- file tabs -->
<svg class="a" style="left:0;top:120px" width="650" height="32">
<defs><linearGradient id="ft1" x1="0" y1="0" x2="0" y2="1"><stop offset="0" stop-color="#5a5a5a"/><stop offset="1" stop-color="#4e4e4e"/></linearGradient>
<linearGradient id="ft2" x1="0" y1="0" x2="0" y2="1"><stop offset="0" stop-color="#666"/><stop offset="1" stop-color="#575757"/></linearGradient></defs>
<path d="M19 27 Q24 26 25 20 L27 12 Q28 8.5 32 8.5 L120 8.5 Q125 8.5 126 13 L128 27Z" fill="url(#ft1)"/>
<path d="M123 27 Q128 26 129 20 L130.5 12 Q131.5 8.5 135 8.5 L222 8.5 Q226 8.5 227 12 L229 20 Q230 26 236 27Z" fill="url(#ft2)"/>
<path d="M230 27 Q234 26 234.5 21 L235 14 Q235.5 11.5 238 11.5 L249 11.5 Q252 11.5 252.5 14 L253 21 Q253.5 26 257 27Z" fill="#585858"/>
<rect x="7" y="26" width="636" height="4" fill="#4c4c4c"/>
<path d="M244 14.8 V21.8 M240.5 18.3 H247.5" stroke="#f0f0f0" stroke-width="1.6"/>
<path d="M212 14 L217.5 19.5 M217.5 14 L212 19.5" stroke="#404040" stroke-width="1.4"/>
</svg>
<div class="t" style="left:32px;top:132px;font-size:10.5px;color:#bdbdbd">开始</div>
<div class="t" style="left:135px;top:133px;font-size:11px;color:#ececec">Drawing1</div>
<!-- title widgets -->
<div class="a" style="left:7px;top:6px;width:34px;height:35px;border:1px solid #3a3a3a;background:linear-gradient(180deg,#dadada 0,#c6c6c6 45%,#b4b4b4 70%,#a6a6a6 100%)"></div>
<svg class="a" style="left:7px;top:7px" width="34" height="34" viewBox="0 0 34 34">
<defs><linearGradient id="ag" x1="0" y1="0" x2="0" y2="1"><stop offset="0" stop-color="#e03a3a"/><stop offset="1" stop-color="#a81010"/></linearGradient></defs>
<path d="M13.2 3.8 Q12.4 4.2 11.8 5.6 L4 23.5 Q3.6 24.8 5 24.8 L10.8 24.8 Q12.5 20.5 13.7 18.2 Q14.9 20.5 16.6 24.8 L22.6 24.8 Q24 24.8 23.4 23.5 L15.6 5.6 Q15 4.2 14.2 3.8Z" fill="url(#ag)" stroke="#e27a7a" stroke-width="0.9"/>
<path d="M13.7 7 L8 21 Q11.5 16 13.7 14 Q15.9 16 19.4 21Z" fill="#e04848" opacity="0.5"/>
<path d="M27 15 l2.2 2.2 l2.2 -2.2" fill="none" stroke="#333" stroke-width="1.3"/>
</svg>
<div class="a" style="left:41px;top:6px;width:20px;height:21px;border-top:1px solid #777;border-right:1px solid #666;background:linear-gradient(180deg,#c8c8c8 0,#9e9e9e 50%,#707070 100%)"></div>
<svg class="a" style="left:49px;top:14px" width="7" height="5"><path d="M0 0 L2.5 2.5 L0 5Z M4 0 L6.5 2.5 L4 5Z" fill="#111"/></svg>
<div class="a" style="left:88px;top:2px;width:92px;height:24px;background:radial-gradient(ellipse at center,rgba(190,232,244,0.55) 0,rgba(190,232,244,0.3) 55%,rgba(190,232,244,0) 75%)"></div>
<div class="t" style="left:100px;top:8px;font-size:11px;letter-spacing:0px;color:#173040;-webkit-text-stroke:0.35px #173040;text-shadow:0 0 6px #bfe9f5,0 0 3px #bfe9f5">Drawing1.dwg</div>
<!-- info center -->
<div class="a" style="left:174px;top:7px;width:368px;height:21px;background:linear-gradient(180deg,#5a5a5a 0,#4a4a4a 100%);border-radius:0 0 3px 0"></div>
<div class="a" style="left:174px;top:7px;width:11px;height:19px;background:linear-gradient(90deg,#9a9a9a,#6e6e6e)"></div>
<svg class="a" style="left:177px;top:12px" width="6" height="8"><path d="M1 0 L4.5 4 L1 8Z" fill="#f0f0f0"/></svg>
<div class="a" style="left:185px;top:7px;width:149px;height:19px;background:#5e5e5e;border:1px solid #333"></div>
<div class="t" style="left:189px;top:11px;font-size:9.3px;color:#b4b4b4;font-style:italic">键入关键字或短语</div>
<svg class="a" style="left:337px;top:9px" width="16" height="14" viewBox="0 0 16 14"><path d="M2 5 L4 1 L7 1 L7 13 L1 13 Z M9 1 L12 1 L14 5 L15 13 L9 13 Z" fill="#eee"/><rect x="6" y="4" width="4" height="4" fill="#eee"/><rect x="3" y="8" width="2" height="4" fill="#333"/><rect x="11" y="8" width="2" height="4" fill="#333"/></svg>
<svg class="a" style="left:358px;top:8px" width="14" height="15" viewBox="0 0 14 15"><circle cx="7" cy="5" r="3.6" fill="#eee"/><path d="M1 14 Q1 9 7 9 Q13 9 13 14Z" fill="#eee"/></svg>
<div class="t" style="left:375px;top:10px;font-size:11px;color:#e6e6e6">登录</div>
<svg class="a" style="left:445px;top:15px" width="5" height="3"><path d="M0 0 L5 0 L2.5 3Z" fill="#ddd"/></svg>
<svg class="a" style="left:456px;top:10px" width="14" height="13" viewBox="0 0 14 13"><path d="M0.5 1 L4 1 L7 6.5 L4 12 L0.5 12 L3.5 6.5Z M13.5 1 L10 1 L7.5 5 L9 6.5 L7.5 8 L10 12 L13.5 12 L10.5 6.5Z" fill="#3f7ee0"/><path d="M4.5 2 L6.8 6.5 L4.5 11" fill="none" stroke="#a8c8f8" stroke-width="0.6"/></svg>
<svg class="a" style="left:477px;top:8px" width="15" height="15" viewBox="0 0 15 15"><path d="M7.5 2 L13.5 12.5 L1.5 12.5 Z" fill="none" stroke="#dfe6f2" stroke-width="2"/><circle cx="7.5" cy="8.5" r="1.8" fill="#3a6ad0"/></svg>
<svg class="a" style="left:496px;top:15px" width="5" height="3"><path d="M0 0 L5 0 L2.5 3Z" fill="#ddd"/></svg>
<div class="a" style="left:506px;top:8px;width:1px;height:17px;background:#6a6a6a"></div>
<svg class="a" style="left:514px;top:8px" width="16" height="16" viewBox="0 0 16 16"><circle cx="8" cy="7.5" r="6.8" fill="#e8eef8"/><circle cx="8" cy="7.5" r="5.5" fill="#2a58b0"/><text x="8" y="11.3" font-family="Liberation Sans" font-weight="bold" font-size="10" fill="#fff" text-anchor="middle">?</text></svg>
<svg class="a" style="left:533px;top:15px" width="5" height="3"><path d="M0 0 L5 0 L2.5 3Z" fill="#ddd"/></svg>
<!-- window controls -->
<div class="a" style="left:560px;top:0;width:84px;height:17px;border:1px solid #3f5f6c;border-top:none;border-radius:0 0 5px 5px;background:linear-gradient(180deg,#c4dde4 0,#b0ccd6 45%,#98bcc8 55%,#a8d0dc 100%)"></div>
<div class="a" style="left:582px;top:0;width:1px;height:16px;background:#4a6e7c"></div>
<div class="a" style="left:604px;top:0;width:1px;height:16px;background:#4a6e7c"></div>
<div class="a" style="left:605px;top:0;width:38px;height:16px;border-radius:0 0 4px 0;background:linear-gradient(180deg,#e4b0a4 0,#dc8a78 35%,#c43c22 48%,#c23a22 70%,#dc7a66 100%)"></div>
<div class="a" style="left:566px;top:8px;width:11px;height:4px;background:#fff;border:1px solid #33505c"></div>
<div class="a" style="left:589px;top:4px;width:10px;height:8px;background:transparent;border:1px solid #33505c;box-shadow:inset 0 0 0 1.5px #fff,inset 0 0 0 2.5px #33505c"></div>
<svg class="a" style="left:618px;top:2px" width="13" height="11" viewBox="0 0 13 11"><path d="M3 2 L10 9 M10 2 L3 9" stroke="#6a2a20" stroke-width="3.6"/><path d="M3 2 L10 9 M10 2 L3 9" stroke="#fff" stroke-width="2.2"/></svg>
<!-- watermark -->
<div class="a" style="left:462px;top:413px;width:163px;height:79px;background:#fff"></div>
<div class="t" style="left:483px;top:431px;font-size:29px;font-weight:bold;color:#1fb83c;letter-spacing:0px">百科全说</div>
<div class="t" style="left:490px;top:466px;font-size:17px;letter-spacing:0.5px;color:#8c8c8c">助你轻松解决</div>
</body></html>
